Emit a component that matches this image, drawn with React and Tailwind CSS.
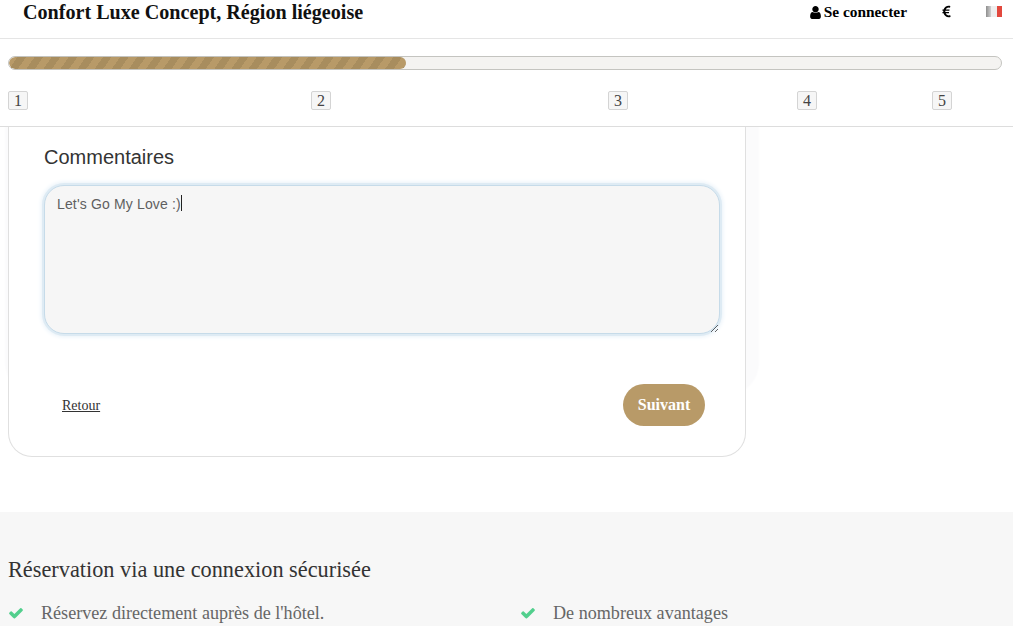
import { FaEuroSign } from "react-icons/fa";

const serif = "font-['Liberation_Serif',serif]";
const steps = [
  { n: 1, w: "w-[303px]" },
  { n: 2, w: "w-[297px]" },
  { n: 3, w: "w-[189px]" },
  { n: 4, w: "w-[135px]" },
  { n: 5, w: "w-[20px]" },
];

const UserIcon = () => (
  <svg viewBox="0 0 1792 1792" className="h-[15px] w-[15px]" fill="currentColor">
    <path d="M1536 1399q0 109-62.5 187t-150.5 78h-854q-88 0-150.5-78t-62.5-187q0-85 8.5-160.5t31.5-152 58.5-131 94-89 134.5-34.5q131 128 313 128t313-128q76 0 134.5 34.5t94 89 58.5 131 31.5 152 8.5 160.5zm-256-887q0 159-112.5 271.5t-271.5 112.5-271.5-112.5-112.5-271.5 112.5-271.5 271.5-112.5 271.5 112.5 112.5 271.5z" />
  </svg>
);

const CheckIcon = () => (
  <svg viewBox="0 0 1792 1792" className="h-4 w-4 shrink-0 text-[#52cf8d]" fill="currentColor">
    <path d="M1671 566q0 40-28 68l-724 724-136 136q-28 28-68 28t-68-28l-136-136-362-362q-28-28-28-68t28-68l136-136q28-28 68-28t68 28l294 295 656-657q28-28 68-28t68 28l136 136q28 28 28 68z" />
  </svg>
);

const Flag = () => (
  <span className="flex h-[11px] w-4 overflow-hidden">
    <span className="w-1/3 bg-gradient-to-r from-[#8f8f8f] to-[#d0d0d0]" />
    <span className="w-1/3 bg-[#eeeeee]" />
    <span className="w-1/3 bg-[#e2483d]" />
  </span>
);

export default function App() {
  return (
    <div className={`h-screen overflow-hidden bg-white ${serif}`}>
      <div className="relative z-10 bg-white">
        <header className="flex h-[39px] items-start border-b border-[#e5e5e5]">
          <h1 className="ml-[23px] text-[20.12px] leading-6 font-bold whitespace-nowrap text-[#111]">
            Confort Luxe Concept, Région liégeoise
          </h1>
          <a className="mt-[3px] ml-auto flex h-[18px] items-center gap-[1px] text-[15.4px] font-bold text-black">
            <span className="-ml-[1px]">
              <UserIcon />
            </span>
            Se connecter
          </a>
          <FaEuroSign className="mt-[5px] ml-[35px] h-[13px] w-[9px] text-black" />
          <span className="mt-[6px] mr-[11px] ml-[35px]">
            <Flag />
          </span>
        </header>

        <div className="h-[88px] border-b border-[#dddddd] px-2 pt-[17px]">
          <div className="h-[14px] w-[994px] overflow-hidden rounded-full border border-[#c4c4c0] bg-[#f4f3f1]">
            <div className="h-full w-[397px] rounded-full bg-[repeating-linear-gradient(125deg,#b89a68_0px,#b89a68_7px,#a88d5e_7px,#a88d5e_14px)]" />
          </div>
          <div className="mt-[21px] flex">
            {steps.map((s) => (
              <div key={s.n} className={s.w}>
                <span className="flex h-[19px] w-5 items-center justify-center rounded-[2px] border border-[#d4d4d4] bg-[#f6f6f6] text-[16px] text-[#444]">
                  {s.n}
                </span>
              </div>
            ))}
          </div>
        </div>
      </div>

      <main className="px-2">
        <section className="h-[330px] w-[738px] rounded-b-[24px] border-x border-b border-[#e0e0e0] bg-white pt-[18px] pl-[35px] shadow-[5px_-70px_2px_8px_#fbfbfc]">
          <h2 className="font-['Liberation_Sans',sans-serif] text-[20px] leading-6 text-[#333]">Commentaires</h2>
          <div className="relative mt-[16px] w-[676px]">
            <textarea
              readOnly
              value="Let's Go My Love :)"
              className="block h-[149px] w-full rounded-[20px] border border-[#c6dbe9] bg-[#f6f6f6] px-3 py-2 font-['Liberation_Sans',sans-serif] text-[14px] leading-5 tracking-[0.15px] text-[#5f5f5f] shadow-[0_0_0_2px_#deebf4,0_0_4px_3px_#e9f2f9] outline-none"
            />
            <span className="absolute top-[10px] left-[137px] h-[16px] w-px bg-[#222]" />
          </div>
          <div className="mt-[50px] flex items-center justify-between pr-[40px]">
            <a className="ml-[18px] text-[14px] text-[#333] underline">Retour</a>
            <button className="h-[42px] w-[82px] rounded-full bg-[#b89a68] text-[16px] font-bold text-white">
              Suivant
            </button>
          </div>
        </section>
      </main>

      <footer className="mt-[55px] h-[200px] bg-[#f7f7f7] px-2 pt-[44px]">
        <h3 className="text-[22.3px] leading-7 text-[#333]">Réservation via une connexion sécurisée</h3>
        <ul className="mt-[15px] flex text-[18.13px] leading-7 text-[#666]">
          <li className="flex w-[512px] items-center">
            <CheckIcon />
            <span className="ml-[17px]">Réservez directement auprès de l'hôtel.</span>
          </li>
          <li className="flex items-center">
            <CheckIcon />
            <span className="ml-[17px]">De nombreux avantages</span>
          </li>
        </ul>
      </footer>
    </div>
  );
}
